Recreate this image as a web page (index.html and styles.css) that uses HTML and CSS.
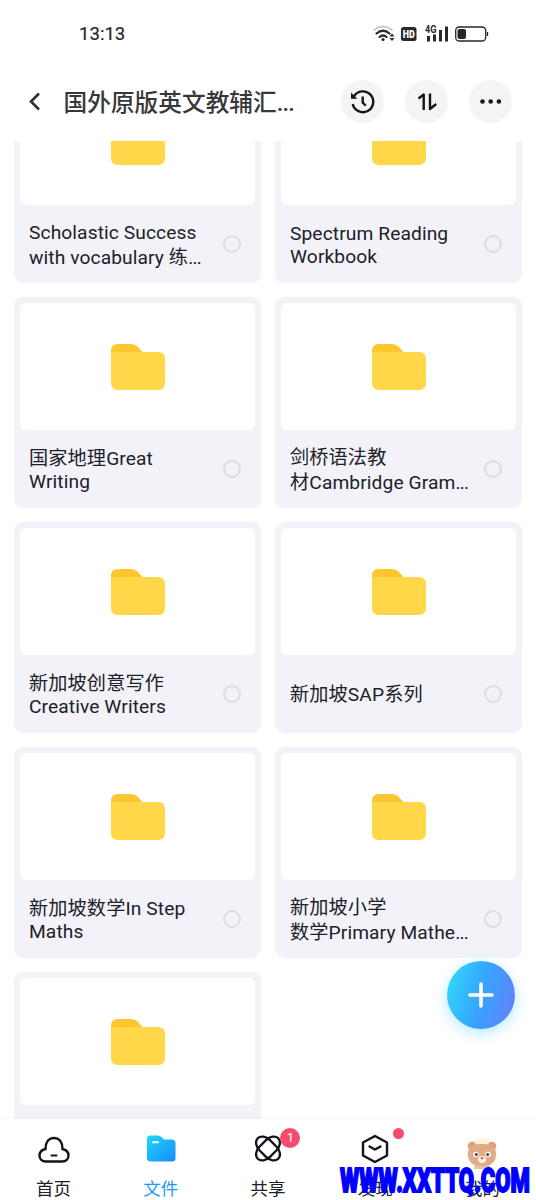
FILE: index.html
```html
<!DOCTYPE html>
<html lang="zh-CN">
<head>
<meta charset="utf-8">
<title>文件</title>
<link rel="stylesheet" href="styles.css">
</head>
<body>
<svg class="defs" width="0" height="0">
  <symbol id="folder" viewBox="0 0 54 46">
    <path d="M0 7Q0 0 7 0H19Q24 0 27 3L34 11V22H0Z" fill="#fbc62e"/>
    <path d="M0 8H47Q54 8 54 15V39Q54 46 47 46H7Q0 46 0 39Z" fill="#ffd748"/>
  </symbol>
</svg>
<div class="phone">
  <header class="status">
    <span class="time">13:13</span>
    <svg class="status-icons" width="118" height="20" viewBox="0 0 118 20">
      <g fill="none" stroke-linecap="round">
        <path d="M3 6Q12 -1 21 6" stroke="#c9c9cb" stroke-width="1.800"/>
        <path d="M5.500 9.500Q12 4 18.500 9.500M8.500 13Q12 10 15.500 13" stroke="#28282c" stroke-width="2.200"/>
      </g>
      <circle cx="12" cy="15.500" r="1.600" fill="#28282c"/>
      <path d="M18.500 12.500L21 9.500L23.500 12.500ZM18.500 14L21 17L23.500 14Z" fill="#28282c"/>
      <rect x="30" y="3" width="15.500" height="14" rx="2.500" fill="#28282c"/>
      <text x="31.800" y="13.800" class="hd" textLength="12" lengthAdjust="spacingAndGlyphs">HD</text>
      <text x="54" y="9" class="net" textLength="11.500" lengthAdjust="spacingAndGlyphs">4G</text>
      <path d="M57.500 12V17.500M63.500 10.500V17.500M69.500 6V17.500M75.500 2.500V17.500" stroke="#28282c" stroke-width="3"/>
      <rect x="84.700" y="3" width="30" height="14" rx="3.500" fill="none" stroke="#28282c" stroke-width="1.300"/>
      <rect x="86.500" y="5" width="8.500" height="10" rx="2" fill="#28282c"/>
      <path d="M116.500 8V12" stroke="#28282c" stroke-width="1.300"/>
    </svg>
  </header>
  <div class="toolbar">
    <svg class="back" width="14" height="20" viewBox="0 0 14 20"><path d="M12 1.500L4 9.500L12 17.500" fill="none" stroke="#303034" stroke-width="2.600"/></svg>
    <h1>国外原版英文教辅汇<em>...</em></h1>
    <div class="actions">
      <button><svg width="26" height="26" viewBox="0 0 26 26" fill="none" stroke="#14161e" stroke-width="2.400"><path d="M4 7.300A10.400 10.400 0 1 1 2.700 15"/><path d="M12.700 7.500V13.500L15.700 16.700"/><path d="M1 3.500V9.800H7.300Z" fill="#14161e" stroke="none"/></svg></button>
      <button><svg width="26" height="26" viewBox="0 0 26 26" fill="none" stroke="#14161e" stroke-width="2.400" stroke-linejoin="round"><path d="M4.500 9.500L9.700 5.500V21M16 4.500V20L22.200 15"/></svg></button>
      <button><svg width="26" height="26" viewBox="0 0 26 26" fill="#14161e"><circle cx="4.500" cy="12.500" r="2.300"/><circle cx="12.700" cy="12.500" r="2.300"/><circle cx="20.900" cy="12.500" r="2.300"/></svg></button>
    </div>
  </div>
  <main class="files">
    <div class="grid">
      <article class="card"><div class="thumb"><svg><use href="#folder"/></svg></div><div class="info"><p><span class="cn">Scholastic Success</span><span class="cn">with vocabulary 练<em>...</em></span></p><i class="pick"></i></div></article>
      <article class="card"><div class="thumb"><svg><use href="#folder"/></svg></div><div class="info"><p><span>Spectrum Reading</span><span>Workbook</span></p><i class="pick"></i></div></article>
      <article class="card"><div class="thumb"><svg><use href="#folder"/></svg></div><div class="info"><p><span>国家地理Great</span><span>Writing</span></p><i class="pick"></i></div></article>
      <article class="card"><div class="thumb"><svg><use href="#folder"/></svg></div><div class="info"><p><span class="cn">剑桥语法教</span><span class="cn">材Cambridge Gram<em>...</em></span></p><i class="pick"></i></div></article>
      <article class="card"><div class="thumb"><svg><use href="#folder"/></svg></div><div class="info"><p><span>新加坡创意写作</span><span>Creative Writers</span></p><i class="pick"></i></div></article>
      <article class="card"><div class="thumb"><svg><use href="#folder"/></svg></div><div class="info"><p><span>新加坡SAP系列</span></p><i class="pick"></i></div></article>
      <article class="card"><div class="thumb"><svg><use href="#folder"/></svg></div><div class="info"><p><span>新加坡数学In Step</span><span>Maths</span></p><i class="pick"></i></div></article>
      <article class="card"><div class="thumb"><svg><use href="#folder"/></svg></div><div class="info"><p><span class="cn">新加坡小学</span><span class="cn">数学Primary Mathe<em>...</em></span></p><i class="pick"></i></div></article>
      <article class="card"><div class="thumb"><svg><use href="#folder"/></svg></div><div class="info"></div></article>
    </div>
  </main>
  <nav class="tabs">
    <a class="tab">
      <svg width="34" height="32" viewBox="0 0 34 32" fill="none" stroke="#11131d" stroke-width="2.400" stroke-linecap="round"><path d="M9 28.500H25C29.500 28.500 31.500 25.500 31.500 22.500C31.500 19 29 16.800 25.500 16C25.500 9.500 22.500 5 17 5S8.500 9.500 8.500 16C5 16.800 2.500 19 2.500 22.500C2.500 25.500 4.500 28.500 9 28.500Z"/><path d="M14.500 22.500H19.500" stroke-width="2"/></svg>
      <span>首页</span>
    </a>
    <a class="tab active">
      <svg width="34" height="32" viewBox="0 0 34 32"><defs><linearGradient id="blue" x1="0" y1="0" x2="1" y2="1"><stop stop-color="#21d5fb"/><stop offset="1" stop-color="#168cfa"/></linearGradient></defs><path d="M3 6Q3 2.500 6.500 2.500H14Q16 2.500 17.500 4L20 6.500H27.500Q31.500 6.500 31.500 10.500V25Q31.500 28.500 28 28.500H6.500Q3 28.500 3 25Z" fill="url(#blue)"/><path d="M9 9.300H14" stroke="#fff" stroke-width="2" stroke-linecap="round"/></svg>
      <span>文件</span>
    </a>
    <a class="tab">
      <svg width="34" height="32" viewBox="0 0 34 32" fill="none" stroke="#11131d" stroke-width="2.300"><rect x="2.500" y="8.200" width="29" height="14.600" rx="10" ry="7.300" transform="rotate(45 17 15.500)"/><rect x="2.500" y="8.200" width="29" height="14.600" rx="10" ry="7.300" transform="rotate(-45 17 15.500)"/></svg>
      <span>共享</span><b class="badge">1</b>
    </a>
    <a class="tab">
      <svg width="34" height="32" viewBox="0 0 34 32" fill="none" stroke="#11131d" stroke-width="2.400" stroke-linejoin="round" stroke-linecap="round"><path d="M17 3L29 9.500V22.500L17 29L5 22.500V9.500Z"/><path d="M11.500 13.500L17 16.500L22.500 13.500"/></svg>
      <span>发现</span><b class="dot"></b>
    </a>
    <a class="tab">
      <svg width="34" height="36" viewBox="0 0 34 36"><circle cx="17" cy="20" r="15" fill="#fff5d6"/><path d="M10 30H24L25 36H9Z" fill="#e9c3a0"/><circle cx="7" cy="13" r="4.300" fill="#d9a27c"/><circle cx="27" cy="13" r="4.300" fill="#d9a27c"/><path d="M3 21C3 13 9 11 17 11S31 13 31 21C31 30 25 33 17 33S3 30 3 21Z" fill="#dfab88"/><circle cx="11" cy="21.500" r="2.800" fill="#fff"/><circle cx="23" cy="21.500" r="2.800" fill="#fff"/><circle cx="11.300" cy="21.500" r="1.500" fill="#5b3a2c"/><circle cx="22.700" cy="21.500" r="1.500" fill="#5b3a2c"/><ellipse cx="17" cy="26.500" rx="4" ry="3.400" fill="#fff0df"/><path d="M15.300 24.500H18.700L17 26.500Z" fill="#70402c"/></svg>
      <span>我的</span>
    </a>
  </nav>
  <button class="add"><svg width="28" height="28" viewBox="0 0 28 28"><path d="M14 3V25M3 14H25" stroke="#fff" stroke-width="3.600" stroke-linecap="round"/></svg></button>
  <svg class="mark" width="199" height="36" viewBox="0 0 199 36"><text x="3" y="28" textLength="190" lengthAdjust="spacingAndGlyphs">WWW.XXTTQ.COM</text></svg>
</div>
</body>
</html>
```
FILE: styles.css
```css
* { box-sizing: border-box; }
body { margin: 0; background: #fff; font-family: Roboto, "Noto Sans CJK SC", sans-serif; color: #202129; }
button { border: 0; padding: 0; }
em { font-style: normal; letter-spacing: -.8px; }
.defs { position: absolute; }
.phone { position: relative; width: 536px; height: 1200px; overflow: hidden; display: flex; flex-direction: column; }
.status { height: 62px; display: flex; justify-content: space-between; align-items: center; padding: 6px 47px 0 79px; flex: none; }
.time { font-size: 18.600px; letter-spacing: 0; color: #28282c; -webkit-text-stroke: .2px; padding-bottom: 1px; }
.hd { font: 900 10.500px Roboto, sans-serif; fill: #fff; }
.net { font: 700 10px Roboto, sans-serif; fill: #28282c; }
.toolbar { height: 79px; flex: none; display: flex; align-items: center; padding: 0 24px 0 27px; }
.back { margin-right: 22.500px; }
h1 { margin: 2px 0 0; font-size: 23.700px; font-weight: 500; line-height: 36px; color: #38383c; white-space: nowrap; }
.actions { margin-left: auto; display: flex; gap: 21px; }
.actions button { width: 43px; height: 43px; border-radius: 50%; background: #f4f4f5; display: grid; place-items: center; }
.files { flex: 1; min-height: 0; overflow: hidden; }
.grid { margin-top: -69px; padding: 0 14px; display: grid; grid-template-columns: 247px 247px; gap: 14px; }
.card { height: 211px; border-radius: 9px; background: #f2f2f8; padding: 6px; }
.thumb { height: 127px; background: #fff; border-radius: 6px; display: flex; justify-content: center; align-items: center; }
.thumb svg { width: 54px; height: 46px; }
.info { height: 78px; display: flex; align-items: center; justify-content: space-between; padding: 0 14px 0 9px; }
.info p { margin: 1px 0 0; font-size: 19.200px; letter-spacing: .1px; }
.info span { display: block; line-height: 23px; white-space: nowrap; }
.info .cn { line-height: 25px; }
.pick { width: 18px; height: 18px; border: 2px solid #dcdce1; border-radius: 50%; }
.tabs { height: 81px; flex: none; display: grid; grid-template-columns: repeat(5, 1fr); background: #fff; box-shadow: 0 -1px 2px #0000000a; position: relative; }
.tab { position: relative; display: flex; flex-direction: column; align-items: center; padding-top: 14px; font-size: 17.500px; }
.tab svg { height: 32px; flex: none; overflow: visible; }
.tab span { margin-top: 11px; line-height: 26px; }
.tab svg[height="36"] { height: 36px; }
.tab svg[height="36"] + span { margin-top: 7px; }
.active { color: #1b9bf5; }
.badge { position: absolute; left: 66px; top: 9px; width: 20px; height: 20px; border-radius: 50%; background: #f64a70; color: #fff; font-size: 13px; font-weight: 400; line-height: 20px; text-align: center; }
.dot { position: absolute; left: 71px; top: 9px; width: 11px; height: 11px; border-radius: 50%; background: #f64a70; }
.add { position: absolute; left: 447px; top: 961px; width: 68px; height: 68px; border-radius: 50%; background: linear-gradient(105deg, #32d1fc 10%, #35a4fc 50%, #6381fb 95%); display: grid; place-items: center; box-shadow: 0 4px 14px #39c4fc60; }
.mark { position: absolute; left: 337px; top: 1164px; }
.mark text { font: 900 33.500px Roboto, sans-serif; fill: #0000fe; stroke: #0000fe; stroke-width: 1.800px; }
```
